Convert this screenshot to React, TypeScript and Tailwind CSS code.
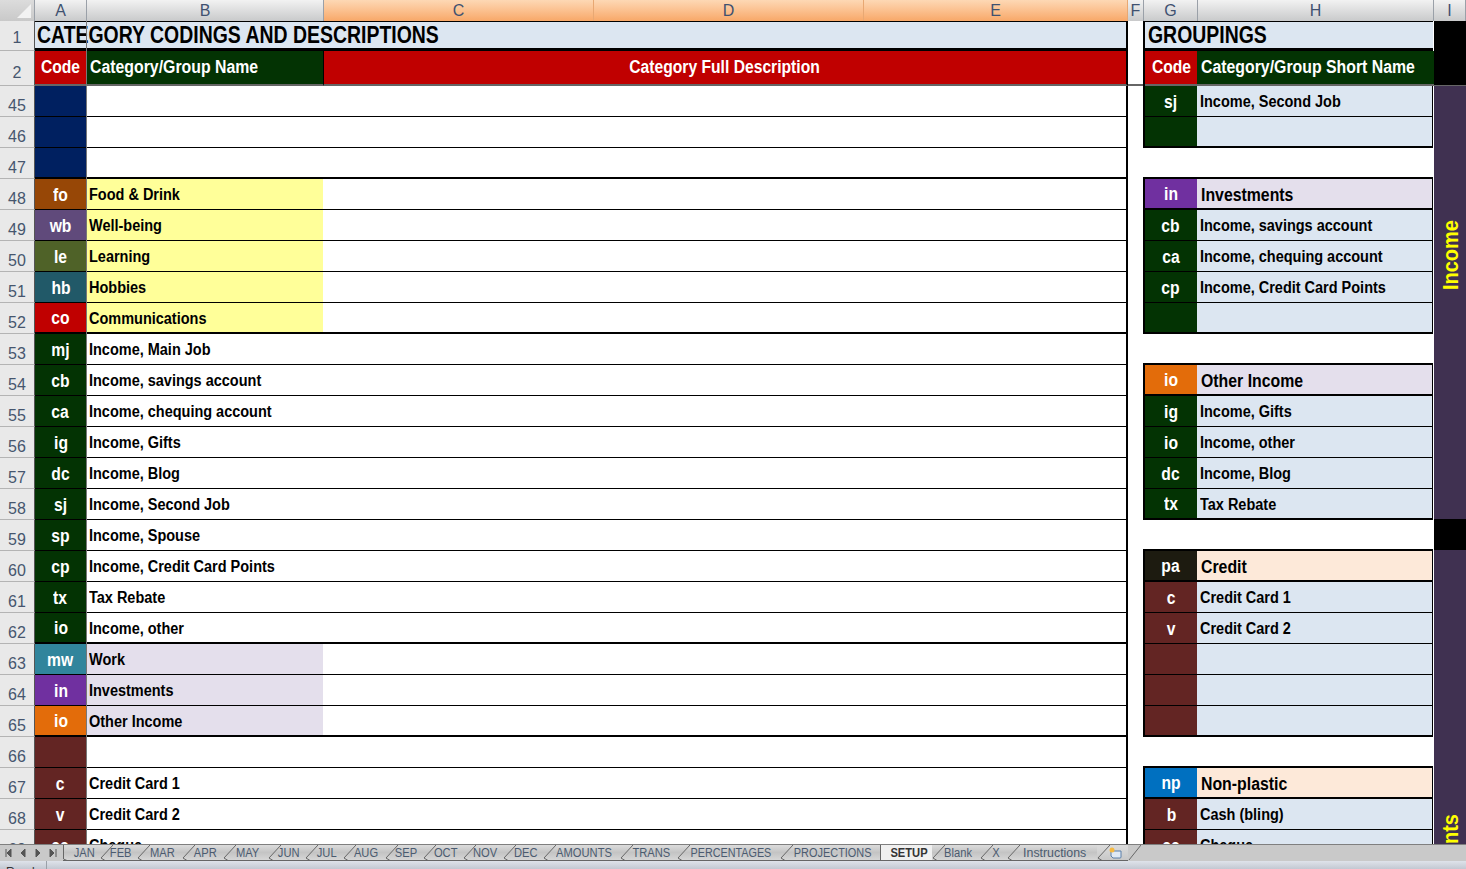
import React from "react";

type L = { n: number; c?: string; bg: string; name?: string; nameBg?: string; thick?: boolean };
type R = { c?: string; bg?: string; name?: string; hBg?: string; head?: boolean; bottom?: boolean; top?: boolean };

const G = "bg-[#033303]";
const Rd = "bg-[#632523]";
const Y = "bg-[#ffff99]";
const Lv = "bg-[#e4dfec]";
const Bl = "bg-[#dce6f1]";
const Pc = "bg-[#fde9d9]";

const left: L[] = [
  { n: 45, bg: "bg-[#002060]" },
  { n: 46, bg: "bg-[#002060]" },
  { n: 47, bg: "bg-[#002060]", thick: true },
  { n: 48, c: "fo", bg: "bg-[#974706]", name: "Food & Drink", nameBg: Y },
  { n: 49, c: "wb", bg: "bg-[#604a7b]", name: "Well-being", nameBg: Y },
  { n: 50, c: "le", bg: "bg-[#4f6228]", name: "Learning", nameBg: Y },
  { n: 51, c: "hb", bg: "bg-[#215968]", name: "Hobbies", nameBg: Y },
  { n: 52, c: "co", bg: "bg-[#c00000]", name: "Communications", nameBg: Y, thick: true },
  { n: 53, c: "mj", bg: G, name: "Income, Main Job" },
  { n: 54, c: "cb", bg: G, name: "Income, savings account" },
  { n: 55, c: "ca", bg: G, name: "Income, chequing account" },
  { n: 56, c: "ig", bg: G, name: "Income, Gifts" },
  { n: 57, c: "dc", bg: G, name: "Income, Blog" },
  { n: 58, c: "sj", bg: G, name: "Income, Second Job" },
  { n: 59, c: "sp", bg: G, name: "Income, Spouse" },
  { n: 60, c: "cp", bg: G, name: "Income, Credit Card Points" },
  { n: 61, c: "tx", bg: G, name: "Tax Rebate" },
  { n: 62, c: "io", bg: G, name: "Income, other", thick: true },
  { n: 63, c: "mw", bg: "bg-[#31859c]", name: "Work", nameBg: Lv },
  { n: 64, c: "in", bg: "bg-[#7030a0]", name: "Investments", nameBg: Lv },
  { n: 65, c: "io", bg: "bg-[#e36c0a]", name: "Other Income", nameBg: Lv, thick: true },
  { n: 66, bg: Rd },
  { n: 67, c: "c", bg: Rd, name: "Credit Card 1" },
  { n: 68, c: "v", bg: Rd, name: "Credit Card 2" },
  { n: 69, c: "cc", bg: Rd, name: "Cheque" },
];

const right: R[] = [
  { c: "sj", bg: G, name: "Income, Second Job", hBg: Bl },
  { bg: G, hBg: Bl, bottom: true },
  { top: true },
  { c: "in", bg: "bg-[#7030a0]", name: "Investments", hBg: Lv, head: true, bottom: true },
  { c: "cb", bg: G, name: "Income, savings account", hBg: Bl },
  { c: "ca", bg: G, name: "Income, chequing account", hBg: Bl },
  { c: "cp", bg: G, name: "Income, Credit Card Points", hBg: Bl },
  { bg: G, hBg: Bl, bottom: true },
  { top: true },
  { c: "io", bg: "bg-[#e36c0a]", name: "Other Income", hBg: Lv, head: true, bottom: true },
  { c: "ig", bg: G, name: "Income, Gifts", hBg: Bl },
  { c: "io", bg: G, name: "Income, other", hBg: Bl },
  { c: "dc", bg: G, name: "Income, Blog", hBg: Bl },
  { c: "tx", bg: G, name: "Tax Rebate", hBg: Bl, bottom: true },
  { top: true },
  { c: "pa", bg: "bg-[#1d1b10]", name: "Credit", hBg: Pc, head: true, bottom: true },
  { c: "c", bg: Rd, name: "Credit Card 1", hBg: Bl },
  { c: "v", bg: Rd, name: "Credit Card 2", hBg: Bl },
  { bg: Rd, hBg: Bl },
  { bg: Rd, hBg: Bl },
  { bg: Rd, hBg: Bl, bottom: true },
  { top: true },
  { c: "np", bg: "bg-[#0070c0]", name: "Non-plastic", hBg: Pc, head: true, bottom: true },
  { c: "b", bg: Rd, name: "Cash (bling)", hBg: Bl },
  { c: "cc", bg: Rd, name: "Cheque", hBg: Bl },
];

const tabs = [
  { t: "JAN", w: "w-[37px]", first: true },
  { t: "FEB", w: "w-[37px]" },
  { t: "MAR", w: "w-[45px]" },
  { t: "APR", w: "w-[41px]" },
  { t: "MAY", w: "w-[45px]" },
  { t: "JUN", w: "w-[37px]" },
  { t: "JUL", w: "w-[38px]" },
  { t: "AUG", w: "w-[42px]" },
  { t: "SEP", w: "w-[38px]" },
  { t: "OCT", w: "w-[40px]" },
  { t: "NOV", w: "w-[40px]" },
  { t: "DEC", w: "w-[40px]" },
  { t: "AMOUNTS", w: "w-[77px]" },
  { t: "TRANS", w: "w-[57px]" },
  { t: "PERCENTAGES", w: "w-[103px]", s: "scale-x-[0.9]" },
  { t: "PROJECTIONS", w: "w-[100px]", s: "scale-x-[0.91]" },
  { t: "SETUP", w: "w-[52px]", active: true },
  { t: "Blank", w: "w-[48px]" },
  { t: "X", w: "w-[27px]" },
  { t: "Instructions", w: "w-[90px]", s: "scale-x-[1.03]" },
];

function ColHead({ label, w, sel }: { label: string; w: string; sel?: boolean }) {
  return (
    <div
      className={`${w} h-[21px] shrink-0 flex items-center justify-center border-r text-[16px] text-[#3f5170] ${
        sel
          ? "border-[#e8a873] bg-gradient-to-b from-[#fdd8b4] to-[#f8a868]"
          : "border-[#9aa0a8] bg-gradient-to-b from-[#f2f2f2] to-[#c9cacb]"
      }`}
    >
      {label}
    </div>
  );
}

function RowNum({ n, h, extra }: { n: number; h: string; extra?: string }) {
  return (
    <div className={`w-[35px] ${h} ${extra ?? ""} shrink-0 bg-[#e9e9e9] border-b border-[#b4b4b4] border-r border-r-[#555] flex items-end justify-center text-[16px] leading-[20px] text-[#46566e]`}>
      {n}
    </div>
  );
}

const codeT = "inline-block whitespace-nowrap scale-x-[0.87]";
const nameT = "inline-block whitespace-nowrap origin-left scale-x-[0.905]";
const headT = "inline-block whitespace-nowrap origin-left scale-x-[0.88]";
const titleT = "inline-block whitespace-nowrap origin-left scale-x-[0.81]";

function Row({ l, r }: { l: L; r: R }) {
  const lb = l.thick ? "border-b-2" : "border-b";
  const rb = r.bottom || r.top ? "border-b-2 border-black" : "border-b border-black";
  return (
    <div className="flex h-[31px] shrink-0">
      <RowNum n={l.n} h="h-[31px]" />
      <div className={`w-[51px] shrink-0 pt-[2px] ${l.bg} ${lb} border-black flex items-center justify-center text-white font-bold text-[18px]`}>
        <span className={codeT}>{l.c}</span>
      </div>
      <div className={`w-[237px] shrink-0 pt-[2px] ${l.nameBg ?? "bg-white"} ${lb} border-black border-l border-l-[#777] flex items-center pl-[2px] font-bold text-[16px] text-black`}>
        <span className={nameT}>{l.name}</span>
      </div>
      <div className={`w-[805px] shrink-0 bg-white ${lb} border-black border-r-2 border-r-black`} />
      <div className="w-[15px] shrink-0 bg-white" />
      {r.top ? (
        <div className={`w-[290px] shrink-0 bg-white ${rb}`} />
      ) : (
        <div className={`w-[290px] shrink-0 flex ${rb} border-l-2 border-r border-x-black`}>
          <div className={`w-[52px] shrink-0 pt-[2px] ${r.bg} flex items-center justify-center text-white font-bold text-[18px]`}>
            <span className={codeT}>{r.c}</span>
          </div>
          <div className={`flex-1 ${r.head ? "pt-[3px]" : "pt-[2px]"} ${r.hBg} flex items-center text-black font-bold ${r.head ? "text-[18px] pl-[4px]" : "text-[16px] pl-[3px]"}`}>
            <span className={r.head ? headT : nameT}>{r.name}</span>
          </div>
        </div>
      )}
    </div>
  );
}

function Side({ text, h, pt }: { text: string; h: string; pt: string }) {
  return (
    <div className={`${h} shrink-0 bg-[#403151] flex justify-center pl-[2px] overflow-hidden ${pt}`}>
      <div className="origin-top scale-y-[0.91] self-start">
        <span className="block [writing-mode:vertical-rl] rotate-180 font-bold text-[22px] leading-none text-[#ffff00]">{text}</span>
      </div>
    </div>
  );
}

export default function App() {
  return (
    <div className="w-[1466px] h-[869px] overflow-hidden bg-white flex flex-col font-['Liberation_Sans',Arial,sans-serif]">
      {/* column heads */}
      <div className="flex h-[21px] shrink-0">
        <div className="w-[35px] h-[21px] shrink-0 bg-gradient-to-b from-[#dcdcdc] to-[#c9c9c9] border-r border-[#9aa0a8] flex items-end justify-end p-[3px]">
          <svg width="14" height="14" viewBox="0 0 14 14"><polygon points="14,0 14,14 0,14" fill="#f2f2f2" /></svg>
        </div>
        <ColHead label="A" w="w-[52px]" />
        <ColHead label="B" w="w-[237px]" />
        <ColHead label="C" w="w-[270px]" sel />
        <ColHead label="D" w="w-[270px]" sel />
        <ColHead label="E" w="w-[264px]" sel />
        <ColHead label="F" w="w-[16px]" />
        <ColHead label="G" w="w-[54px]" />
        <ColHead label="H" w="w-[236px]" />
        <ColHead label="I" w="w-[32px]" />
      </div>

      {/* sheet */}
      <div className="relative flex h-[823px] shrink-0 overflow-hidden">
        <div className="flex flex-col w-[1434px] shrink-0">
          <div className="flex h-[30px] shrink-0">
            <RowNum n={1} h="h-[30px]" extra="pb-[2px]" />
            <div className="w-[1093px] shrink-0 bg-[#dce6f1] border-t border-b-[3px] border-r-2 border-black flex items-center pl-[2px] font-bold text-[24px] text-black overflow-hidden">
              <span className={titleT}>CATEGORY CODINGS AND DESCRIPTIONS</span>
            </div>
            <div className="w-[15px] shrink-0 bg-white" />
            <div className="w-[290px] shrink-0 bg-[#dce6f1] border-t border-b-[3px] border-l-2 border-black flex items-center pl-[3px] font-bold text-[24px] text-black overflow-hidden">
              <span className={titleT}>GROUPINGS</span>
            </div>
          </div>
          <div className="flex h-[35px] shrink-0">
            <RowNum n={2} h="h-[35px]" extra="pb-[2px]" />
            <div className="w-[51px] shrink-0 bg-[#c00000] border-b-2 border-[#666] flex items-center justify-center text-white font-bold text-[18px]">
              <span className={codeT}>Code</span>
            </div>
            <div className="w-[237px] shrink-0 bg-[#033303] border-b-2 border-[#666] flex items-center pl-[4px] text-white font-bold text-[18px]">
              <span className={headT}>Category/Group Name</span>
            </div>
            <div className="w-[805px] shrink-0 bg-[#c00000] border-b-2 border-b-[#666] border-r-2 border-r-black border-l border-l-black flex items-center justify-center text-white font-bold text-[18px]">
              <span className={codeT}>Category Full Description</span>
            </div>
            <div className="w-[15px] shrink-0 bg-white border-b-2 border-[#666]" />
            <div className="w-[290px] shrink-0 flex border-l-2 border-black">
              <div className="w-[52px] shrink-0 bg-[#c00000] border-b-2 border-[#666] flex items-center justify-center text-white font-bold text-[18px]">
                <span className={codeT}>Code</span>
              </div>
              <div className="flex-1 bg-[#033303] border-b-2 border-[#666] flex items-center pl-[4px] text-white font-bold text-[18px]">
                <span className={headT}>Category/Group Short Name</span>
              </div>
            </div>
          </div>
          {left.map((l, i) => (
            <Row key={l.n} l={l} r={right[i]} />
          ))}
        </div>

        <div className="w-[32px] shrink-0 flex flex-col">
          <div className="h-[65px] shrink-0 bg-black border-b border-[#666]" />
          <Side text="Income" h="h-[433px]" pt="pt-[134px]" />
          <div className="h-[31px] shrink-0 bg-black" />
          <Side text="Accounts" h="h-[294px]" pt="pt-[264px]" />
        </div>

        {/* freeze-pane line */}
        <div className="absolute left-[86px] top-0 bottom-0 w-px bg-[#777]" />
      </div>

      {/* tab strip */}
      <div className="flex h-[17px] shrink-0 bg-[#c9c9c9] border-t border-[#7f7f7f] text-[12px] text-[#4b5b70]">
        <div className="w-[63px] shrink-0 flex items-center text-[#555]">
          <svg width="62" height="14" viewBox="0 0 62 14">
            <path d="M6 3v8M11 3L7 7l4 4z M25 3l-4 4 4 4z M36 3l4 4-4 4z M50 3l4 4-4 4z M56 3v8" fill="#555" stroke="#555" strokeWidth="1" />
          </svg>
        </div>
        {tabs.map((t) => (
          <div
            key={t.t}
            className={`${t.w} shrink-0 relative flex items-center justify-center pl-[5px] border-b border-[#666] ${
              t.active ? "bg-[#f0f0f0] font-bold text-[#333] border-l border-l-[#666]" : "bg-gradient-to-b from-[#dcdcdc] via-[#c4c4c4] to-[#d6d6d6]"
            }`}
          >
            <span className={`inline-block whitespace-nowrap ${t.s ?? "scale-x-[0.93]"}`}>{t.t}</span>
            {!t.active && (
              <svg className="absolute left-0 top-0" width="13" height="16" viewBox="0 0 13 16">
                {t.first ? (
                  <path d="M0.5 0 V14 L4 15.5" fill="none" stroke="#666" strokeWidth="1" />
                ) : (
                  <path d="M13 0 L1 13 L5 15.5" fill="none" stroke="#666" strokeWidth="1" />
                )}
              </svg>
            )}
          </div>
        ))}
        <div className="w-[31px] shrink-0 relative flex items-center justify-center pl-[6px] border-b border-[#666] bg-gradient-to-b from-[#dcdcdc] to-[#c8c8c8]">
          <svg className="absolute left-0 top-0" width="13" height="16" viewBox="0 0 13 16">
            <path d="M13 0 L1 13 L5 15.5" fill="none" stroke="#666" strokeWidth="1" />
          </svg>
          <svg width="16" height="14" viewBox="0 0 16 14">
            <path d="M3 5h10v6a1 1 0 0 1-1 1H5l-2-2z" fill="#dfe9f5" stroke="#5b7fa8" />
            <circle cx="4" cy="4" r="2.5" fill="#f5b942" />
          </svg>
        </div>
        <svg className="shrink-0" width="13" height="16" viewBox="0 0 13 16">
          <path d="M13 0 L1 15" fill="none" stroke="#666" strokeWidth="1" />
        </svg>
        <div className="flex-1" />
      </div>

      {/* status bar */}
      <div className="flex-1 bg-gradient-to-b from-[#dfe3ea] to-[#c3c8d2] flex overflow-hidden">
        <div className="w-[47px] border-r border-[#9aa0a8] pl-[6px] pt-[4px] text-[12px] leading-[14px] text-[#333]">Ready</div>
      </div>
    </div>
  );
}
